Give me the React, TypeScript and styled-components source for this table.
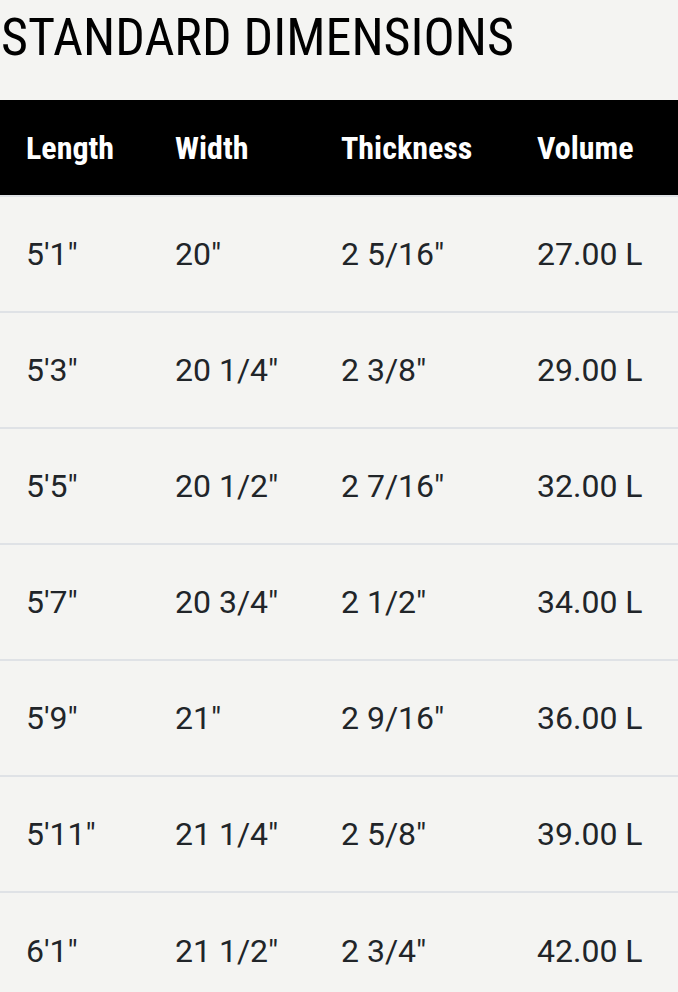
import * as React from 'react';
import styled, { createGlobalStyle } from 'styled-components';

const GlobalStyle = createGlobalStyle`
  html, body {
    margin: 0;
    padding: 0;
    background-color: #f4f4f2;
  }
  body {
    font-family: Roboto, "Liberation Sans", sans-serif;
    color: #212529;
  }
`;

const Wrapper = styled.div`
  width: 678px;
  overflow: hidden;
`;

const Title = styled.h2`
  margin: 0;
  padding: 10px 0 0 1px;
  height: 100px;
  box-sizing: border-box;
  font-family: "Roboto Condensed", Roboto, sans-serif;
  font-stretch: 75%;
  font-weight: 400;
  font-size: 52px;
  line-height: 56px;
  color: #000;
  white-space: nowrap;
`;

const Table = styled.table`
  width: 678px;
  border-collapse: collapse;
  table-layout: fixed;
`;

const HeadCell = styled.th<{ w: number }>`
  width: ${(p) => p.w}px;
  height: 96px;
  padding: 0 0 0 26px;
  box-sizing: border-box;
  background: #000;
  color: #fff;
  text-align: left;
  font-family: "Roboto Condensed", Roboto, sans-serif;
  font-stretch: 75%;
  font-weight: 700;
  font-size: 32px;
`;

const Row = styled.tr`
  border-top: 2px solid #dfe2e6;
`;

const Cell = styled.td`
  height: 116px;
  padding: 0 0 0 26px;
  box-sizing: border-box;
  font-size: 32px;
  color: #212529;
  white-space: nowrap;
`;

const columns = [
  { label: 'Length', w: 149 },
  { label: 'Width', w: 166 },
  { label: 'Thickness', w: 196 },
  { label: 'Volume', w: 167 },
];

const rows = [
  ['5\'1"', '20"', '2 5/16"', '27.00 L'],
  ['5\'3"', '20 1/4"', '2 3/8"', '29.00 L'],
  ['5\'5"', '20 1/2"', '2 7/16"', '32.00 L'],
  ['5\'7"', '20 3/4"', '2 1/2"', '34.00 L'],
  ['5\'9"', '21"', '2 9/16"', '36.00 L'],
  ['5\'11"', '21 1/4"', '2 5/8"', '39.00 L'],
  ['6\'1"', '21 1/2"', '2 3/4"', '42.00 L'],
];

export default function App() {
  return (
    <Wrapper>
      <GlobalStyle />
      <Title>STANDARD DIMENSIONS</Title>
      <Table>
        <thead>
          <tr>
            {columns.map((c) => (
              <HeadCell key={c.label} w={c.w}>
                {c.label}
              </HeadCell>
            ))}
          </tr>
        </thead>
        <tbody>
          {rows.map((r, i) => (
            <Row key={i}>
              {r.map((v, j) => (
                <Cell key={j}>{v}</Cell>
              ))}
            </Row>
          ))}
        </tbody>
      </Table>
    </Wrapper>
  );
}
